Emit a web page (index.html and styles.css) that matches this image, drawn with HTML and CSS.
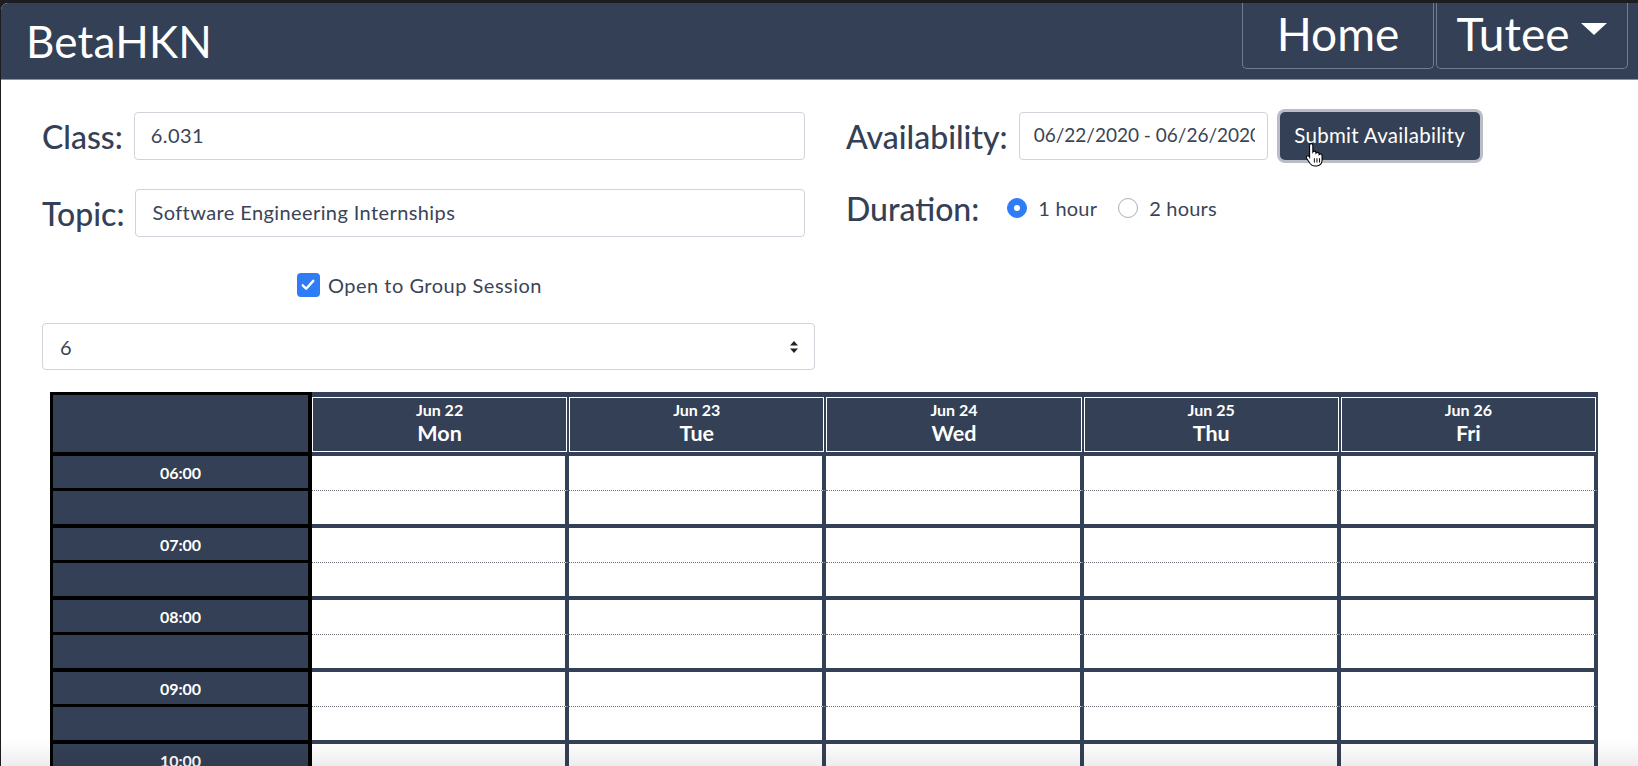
FILE: index.html
```html
<!DOCTYPE html>
<html lang="en">
<head>
<meta charset="utf-8">
<title>BetaHKN</title>
<link rel="stylesheet" href="styles.css">
</head>
<body>
<div class="window">
  <header class="navbar">
    <div class="brand">BetaHKN</div>
    <nav class="nav">
      <a class="nav-btn">Home</a>
      <a class="nav-btn">Tutee <span class="caret"></span></a>
    </nav>
  </header>

  <main class="page">
    <div class="form-grid">
      <div class="col-left">
        <div class="field-row">
          <label class="lbl">Class:</label>
          <input class="text-input" type="text" value="6.031">
        </div>
        <div class="field-row second">
          <label class="lbl">Topic:</label>
          <input class="text-input" type="text" value="Software Engineering Internships">
        </div>
        <div class="check-row">
          <span class="checkbox">
            <svg viewBox="0 0 24 24" width="18" height="18"><path d="M5 12.5l4.5 4.5L19 6.5" fill="none" stroke="#fff" stroke-width="3.2" stroke-linecap="round" stroke-linejoin="round"/></svg>
          </span>
          <span class="check-label">Open to Group Session</span>
        </div>
        <div class="select-box">
          <span class="select-value">6</span>
          <svg class="select-arrows" viewBox="0 0 10 16" width="10" height="16"><path d="M5 2L9 6.5H1z M5 14L1 9.5h8z" fill="#222"/></svg>
        </div>
      </div>

      <div class="col-right">
        <div class="avail-row">
          <label class="lbl">Availability:</label>
          <input class="date-input" type="text" value="06/22/2020 - 06/26/2020">
          <button class="submit-btn">Submit Availability</button>
        </div>
        <div class="duration-row">
          <label class="lbl">Duration:</label>
          <span class="radio checked"></span><span class="radio-label">1 hour</span>
          <span class="radio"></span><span class="radio-label">2 hours</span>
        </div>
      </div>
    </div>

    <div class="schedule">
      <div class="t-head"></div>
      <div class="d-head"><div class="d-box"><span class="d-date">Jun 22</span><span class="d-day">Mon</span></div></div>
      <div class="d-head"><div class="d-box"><span class="d-date">Jun 23</span><span class="d-day">Tue</span></div></div>
      <div class="d-head"><div class="d-box"><span class="d-date">Jun 24</span><span class="d-day">Wed</span></div></div>
      <div class="d-head"><div class="d-box"><span class="d-date">Jun 25</span><span class="d-day">Thu</span></div></div>
      <div class="d-head"><div class="d-box"><span class="d-date">Jun 26</span><span class="d-day">Fri</span></div></div>

      <div class="t-cell first">06:00</div>
      <div class="slot first"></div><div class="slot first"></div><div class="slot first"></div><div class="slot first"></div><div class="slot first"></div>
      <div class="t-cell second"></div>
      <div class="slot second"></div><div class="slot second"></div><div class="slot second"></div><div class="slot second"></div><div class="slot second"></div>

      <div class="t-cell first">07:00</div>
      <div class="slot first"></div><div class="slot first"></div><div class="slot first"></div><div class="slot first"></div><div class="slot first"></div>
      <div class="t-cell second"></div>
      <div class="slot second"></div><div class="slot second"></div><div class="slot second"></div><div class="slot second"></div><div class="slot second"></div>

      <div class="t-cell first">08:00</div>
      <div class="slot first"></div><div class="slot first"></div><div class="slot first"></div><div class="slot first"></div><div class="slot first"></div>
      <div class="t-cell second"></div>
      <div class="slot second"></div><div class="slot second"></div><div class="slot second"></div><div class="slot second"></div><div class="slot second"></div>

      <div class="t-cell first">09:00</div>
      <div class="slot first"></div><div class="slot first"></div><div class="slot first"></div><div class="slot first"></div><div class="slot first"></div>
      <div class="t-cell second"></div>
      <div class="slot second"></div><div class="slot second"></div><div class="slot second"></div><div class="slot second"></div><div class="slot second"></div>

      <div class="t-cell first">10:00</div>
      <div class="slot first"></div><div class="slot first"></div><div class="slot first"></div><div class="slot first"></div><div class="slot first"></div>
      <div class="t-cell second"></div>
      <div class="slot second"></div><div class="slot second"></div><div class="slot second"></div><div class="slot second"></div><div class="slot second"></div>
    </div>
  </main>

  <svg class="cursor" viewBox="0 0 20 24" width="22" height="26">
    <path d="M6.5 1.5c.9 0 1.5.7 1.5 1.5v6.2c.3-.5.8-.8 1.4-.8.9 0 1.5.7 1.5 1.5v.4c.3-.4.8-.7 1.4-.7.9 0 1.5.7 1.5 1.5v.5c.3-.3.7-.5 1.2-.5.9 0 1.5.7 1.5 1.5v4.5c0 2.8-2.2 5-5 5H9.5c-1.6 0-3-.8-3.9-2L2.3 15.2c-.5-.7-.4-1.6.3-2.1.6-.5 1.5-.4 2 .2L5 14V3c0-.8.6-1.5 1.5-1.5z" fill="#fff" stroke="#000" stroke-width="1"/>
    <path d="M9.4 15v4M11.8 15v4M14.2 15v4" stroke="#000" stroke-width="0.9"/>
  </svg>
  <div class="bottom-fade"></div>
</div>
</body>
</html>
```

FILE: styles.css
```css
* { box-sizing: border-box; }

html, body {
  margin: 0;
  padding: 0;
  background: #1c1d20;
  overflow: hidden;
}

body {
  font-family: Lato, "Open Sans", sans-serif;
  color: #344055;
}

.window {
  margin-top: 3px;
  margin-left: 1px;
  height: 763px;
  background: #fff;
  border-top-left-radius: 7px;
  overflow: hidden;
  position: relative;
}

/* ---------- navbar ---------- */
.navbar {
  height: 77px;
  background: #344055;
  border-bottom: 1px solid #8a93a2;
  display: flex;
  align-items: flex-start;
  justify-content: space-between;
  padding-right: 10px;
}

.brand {
  color: #fff;
  font-family: Lato, sans-serif;
  font-size: 44px;
  font-weight: 400;
  line-height: 76px;
  padding-left: 25px;
  letter-spacing: 0.2px;
}

.nav {
  display: flex;
  gap: 2px;
}

.nav-btn {
  width: 192px;
  height: 66px;
  border: 1px solid #727c8c;
  border-top: none;
  border-radius: 0 0 5px 5px;
  color: #fff;
  font-size: 46px;
  line-height: 62px;
  display: flex;
  align-items: center;
  justify-content: center;
  gap: 12px;
  padding-bottom: 4px;
}

.caret {
  width: 0;
  height: 0;
  border-left: 13px solid transparent;
  border-right: 13px solid transparent;
  border-top: 12px solid #fff;
  margin-top: -10px;
}

/* ---------- form ---------- */
.page {
  padding-top: 32px;
}

.form-grid {
  display: flex;
  padding-left: 41px;
  gap: 31px;
}

.col-left {
  width: 773px;
  display: flex;
  flex-direction: column;
}

.field-row {
  display: flex;
  align-items: center;
  gap: 11px;
  margin-right: 10px;
  height: 48px;
}

.field-row.second {
  margin-top: 29px;
}

.lbl {
  font-size: 32px;
  font-weight: 500;
  color: #344055;
  white-space: nowrap;
}

.text-input {
  flex: 1;
  height: 48px;
  border: 1px solid #ced4da;
  border-radius: 4px;
  padding: 0 16px;
  font-family: Lato, sans-serif;
  font-size: 20px;
  letter-spacing: 0.4px;
  color: #3a4457;
  outline: none;
  padding-bottom: 3px;
}

.check-row {
  margin-top: 36px;
  margin-right: 18px;
  height: 24px;
  display: flex;
  align-items: center;
  justify-content: center;
  gap: 8px;
}

.checkbox {
  width: 23px;
  height: 24px;
  border-radius: 4px;
  background: #2f7df6;
  display: flex;
  align-items: center;
  justify-content: center;
}

.check-label {
  font-size: 20px;
  letter-spacing: 0.5px;
  color: #3a4457;
}

.select-box {
  margin-top: 26px;
  height: 47px;
  border: 1px solid #ced4da;
  border-radius: 4px;
  display: flex;
  align-items: center;
  justify-content: space-between;
  padding: 0 15px 0 17px;
  font-size: 20px;
  color: #3a4457;
}

.col-right {
  display: flex;
  flex-direction: column;
}

.avail-row {
  display: flex;
  align-items: center;
  height: 48px;
}

.date-input {
  margin-left: 11px;
  width: 249px;
  height: 48px;
  border: 1px solid #ced4da;
  border-radius: 4px;
  padding: 0 12px 3px 14px;
  font-family: Lato, sans-serif;
  font-size: 19px;
  color: #3a4457;
  outline: none;
}

.submit-btn {
  margin-left: 12px;
  width: 200px;
  height: 48px;
  background: #344055;
  color: #fff;
  border: none;
  border-radius: 5px;
  box-shadow: 0 0 0 3px #b9bec6;
  font-family: Lato, sans-serif;
  font-size: 20.5px;
  letter-spacing: 0.3px;
  padding: 0 0 3px;
}

.duration-row {
  margin-top: 31px;
  height: 34px;
  display: flex;
  align-items: center;
}

.duration-row .lbl {
  margin-right: 28px;
}

.radio {
  width: 20px;
  height: 20px;
  border-radius: 50%;
  border: 1px solid #a9adb3;
  background: #fff;
  margin-right: 11px;
}

.radio.checked {
  background: #2f7df6;
  border-color: #2f7df6;
  position: relative;
}

.radio.checked::after {
  content: "";
  position: absolute;
  left: 6px;
  top: 6px;
  width: 6px;
  height: 6px;
  border-radius: 50%;
  background: #fff;
}

.radio-label {
  font-size: 20px;
  letter-spacing: 0.2px;
  color: #3a4457;
  margin-right: 21px;
}

/* ---------- schedule ---------- */
.schedule {
  margin-top: 22px;
  margin-left: 49px;
  width: 1548px;
  display: grid;
  grid-template-columns: 262px repeat(5, 1fr);
  font-family: Lato, sans-serif;
  color: #fff;
}

.t-head {
  height: 64px;
  background: #344055;
  border: 3px solid #000;
  border-right-width: 4px;
  border-bottom-width: 4px;
}

.d-head {
  height: 64px;
  background: #344055;
  padding: 5px 2px 4px 0;
}

.d-box {
  height: 100%;
  border: 1px solid #fff;
  display: flex;
  flex-direction: column;
  align-items: center;
  padding-top: 2px;
  gap: 2px;
}

.d-date {
  font-size: 16px;
  font-weight: 700;
  line-height: 19px;
}

.d-day {
  font-size: 21.5px;
  font-weight: 700;
  line-height: 25px;
}

.t-cell {
  background: #344055;
  border-left: 3px solid #000;
  border-right: 4px solid #000;
  font-size: 16px;
  font-weight: 700;
  display: flex;
  align-items: center;
  justify-content: center;
}

.t-cell.first {
  height: 35px;
  border-bottom: 3px solid #000;
}

.t-cell.second {
  height: 37px;
  border-bottom: 4px solid #000;
}

.slot {
  background: #fff;
  border-right: 4px solid #344055;
}

.slot.first {
  height: 35px;
  border-bottom: 1px dotted #6b6f76;
}

.slot.second {
  height: 37px;
  border-bottom: 4px solid #344055;
}

/* ---------- overlays ---------- */
.cursor {
  position: absolute;
  left: 1303px;
  top: 139px;
}

.bottom-fade {
  position: absolute;
  left: 0;
  right: 0;
  bottom: 0;
  height: 26px;
  background: linear-gradient(to bottom, rgba(0,0,0,0), rgba(0,0,0,0.07));
  pointer-events: none;
}
```
